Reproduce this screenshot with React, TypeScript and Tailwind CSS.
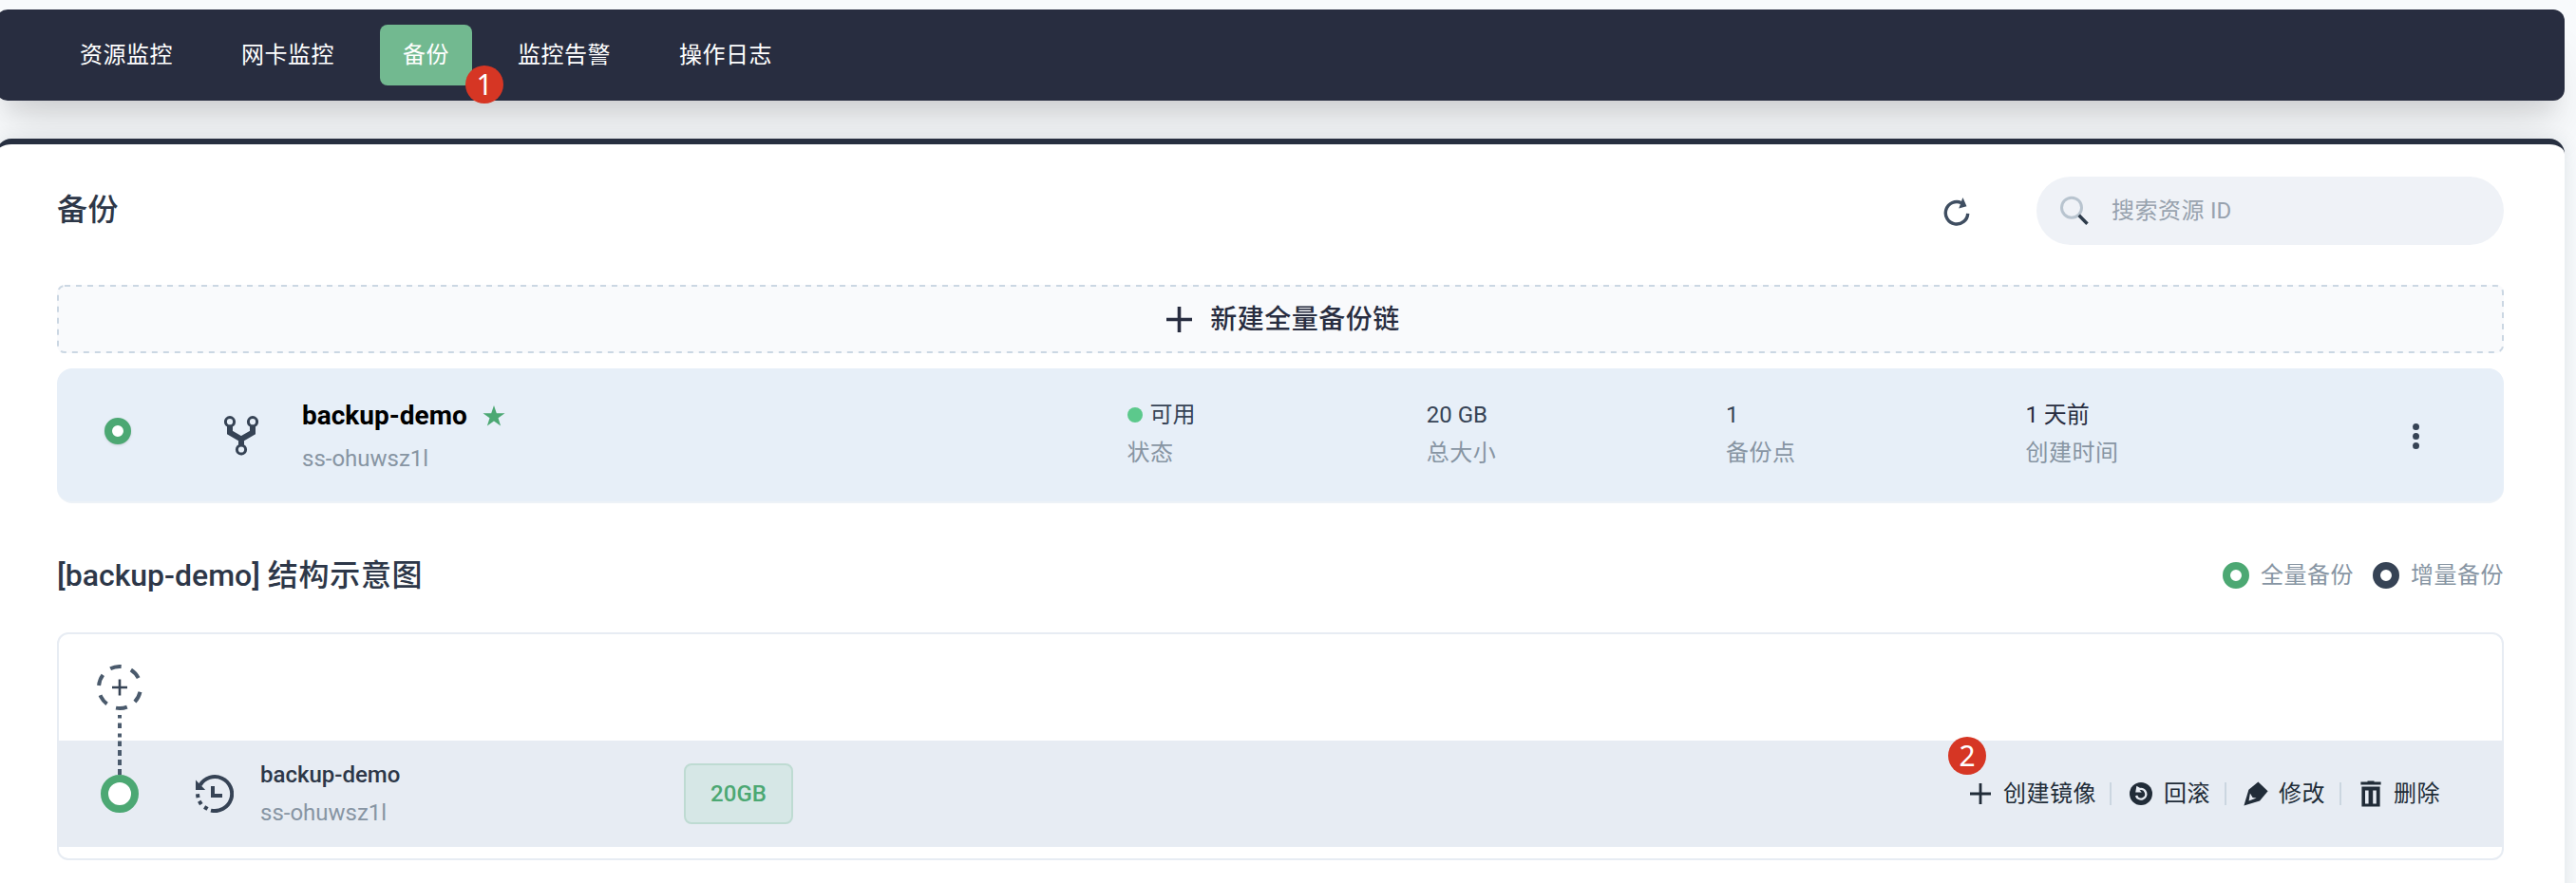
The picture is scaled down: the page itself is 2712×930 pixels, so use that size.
import React from "react";

const NAV = ["资源监控", "网卡监控", "备份", "监控告警", "操作日志"];

const Badge = ({ children, className }: { children: React.ReactNode; className: string }) => (
  <span
    className={`absolute flex h-10 w-10 items-center justify-center rounded-full bg-[#d63624] font-['Noto_Sans','Liberation_Sans',sans-serif] text-[30px] leading-10 tracking-normal text-white ${className}`}
  >
    {children}
  </span>
);

const Ring = ({ className }: { className: string }) => (
  <span className={`box-border block shrink-0 rounded-full bg-white ${className}`} />
);

const RefreshIcon = () => (
  <svg width="28" height="32" viewBox="0 0 28 32" fill="none">
    <path d="M25.7 18.8A11.7 11.7 0 1 1 19 7.7" stroke="#3f4e61" strokeWidth="3.4" />
    <path d="M20.4 2L24.5 11.2L16.3 13.4Z" fill="#3f4e61" />
  </svg>
);

const SearchIcon = () => (
  <svg width="32" height="32" viewBox="0 0 32 32" fill="none">
    <circle cx="13" cy="12.7" r="10.5" stroke="#b8c4cf" strokeWidth="3" />
    <path d="M20.7 20.7L29.5 29.8" stroke="#2d3b4b" strokeWidth="3.4" />
  </svg>
);

const PlusIcon = ({ size, stroke }: { size: number; stroke: number }) => (
  <svg width={size} height={size} viewBox={`0 0 ${size} ${size}`} className="shrink-0">
    <path
      d={`M${size / 2} 0V${size}M0 ${size / 2}H${size}`}
      stroke="currentColor"
      strokeWidth={stroke}
    />
  </svg>
);

const ForkIcon = () => (
  <svg width="36" height="42" viewBox="0 0 36 42" fill="none" stroke="#364355">
    <path d="M6 10V17.5L18 24.5L30 17.5V10M18 24V32" strokeWidth="6" />
    <circle cx="6" cy="6.2" r="4.6" fill="#e7eff8" strokeWidth="3" />
    <circle cx="30" cy="6.2" r="4.6" fill="#e7eff8" strokeWidth="3" />
    <circle cx="18" cy="35.5" r="4.6" fill="#e7eff8" strokeWidth="3" />
  </svg>
);

const HistoryIcon = () => (
  <svg width="40" height="40" viewBox="0 0 40 40" fill="none">
    <path d="M4.6 11A18 18 0 1 1 16 37.6" stroke="#364355" strokeWidth="4" />
    <path d="M0 5.5V16H10.2Z" fill="#364355" />
    <path d="M18 12V22H28" stroke="#364355" strokeWidth="4" />
    <rect x="0.2" y="20.2" width="4" height="4" fill="#364355" transform="rotate(-8 2 22)" />
    <rect x="2.8" y="27.4" width="4" height="4" fill="#364355" transform="rotate(-32 4.8 29.4)" />
    <rect x="8.8" y="33" width="4" height="4" fill="#364355" transform="rotate(-58 10.8 35)" />
  </svg>
);

const StarIcon = () => (
  <svg width="24" height="22" viewBox="0 0 24 22">
    <path d="M12 0L14.8 8.2H23.5L16.5 13.3L19.1 21.6L12 16.6L4.9 21.6L7.5 13.3L0.5 8.2H9.2Z" fill="#4ca873" />
  </svg>
);

const RollbackIcon = () => (
  <svg width="24" height="24" viewBox="0 0 24 24" fill="none">
    <circle cx="12" cy="12" r="12" fill="#212c38" />
    <path d="M10.4 7.2A5.3 5.3 0 1 1 7 14" stroke="#e7ecf3" strokeWidth="2.4" />
    <path d="M7.4 3.8L6.2 10.6L12.8 10.4L10.8 8.4L11.2 6Z" fill="#e7ecf3" />
  </svg>
);

const PenIcon = () => (
  <svg width="26" height="26" viewBox="0 0 26 26">
    <path d="M15.4 0.4L25.6 10.2L17 20.6L0.4 25.4L5.4 8.8Z" fill="#212c38" />
    <path d="M6.9 12.4L5.6 20.4L13.6 17.6L9.6 16.9Z" fill="#e7ecf3" />
  </svg>
);

const TrashIcon = () => (
  <svg width="22" height="28" viewBox="0 0 22 28">
    <path d="M7.5 0.4H14.5V1.6H21.6V4.4H0.4V1.6H7.5Z" fill="#212c38" />
    <path fillRule="evenodd" d="M1.4 6.4H20.6V27.4H1.4ZM5 10.4V24.4H8.6V10.4ZM13.2 10.4V24.4H16.8V10.4Z" fill="#212c38" />
  </svg>
);

const DASHES = [
  [53, 3.5], [61.5, 5.5], [72.5, 4], [80.5, 5.5], [90, 6], [100, 6], [110, 6],
];

const ChainHead = () => (
  <svg width="48" height="117" viewBox="0 0 48 117" fill="none">
    <circle
      cx="24" cy="24" r="22" stroke="#4a5a6c" strokeWidth="4" pathLength={360}
      strokeDasharray="31 28 31 39 31 26 31 27 31 27 31 27" transform="rotate(-116.5 24 24)"
    />
    <path d="M24 15.5V32.5M16 24H32" stroke="#364355" strokeWidth="2.6" />
    {DASHES.map(([y, h]) => (
      <rect key={y} x="22" y={y} width="4" height={h} fill="#4a5a6c" />
    ))}
  </svg>
);

const Stat = ({ value, label, className = "text-[#364355]", dot }: { value: string; label: string; className?: string; dot?: boolean }) => (
  <div className="w-[315.3px] shrink-0 pt-[29px]">
    <div className={`flex h-10 items-center gap-2 leading-10 tracking-normal ${className}`}>
      {dot && <span className="h-4 w-4 rounded-full bg-[#5cc98c]" />}
      <span>{value}</span>
    </div>
    <div className="h-10 leading-10 text-[#8795a3]">{label}</div>
  </div>
);

const Divider = () => <span className="h-6 w-0.5 bg-[#cbd6e0]" />;

export default function App() {
  return (
    <div className="h-[930px] w-[2712px] overflow-hidden bg-[#f8fafc] pt-2.5 font-['Roboto','Noto_Sans_CJK_SC',sans-serif] text-[24px] tracking-[0.5px] text-[#2d3748]">
      <nav className="-ml-1 flex h-24 w-[2704px] items-center gap-6 rounded-xl bg-[#282d40] pl-16 text-white shadow-[0_40px_50px_-10px_rgba(0,0,0,0.1),0_20px_20px_-10px_rgba(0,0,0,0.08)]">
        {NAV.map((item) =>
          item === "备份" ? (
            <div key={item} className="relative flex h-16 items-center rounded-lg bg-[#72b990] px-6">
              {item}
              <Badge className="-right-[33px] top-[43px]">1</Badge>
            </div>
          ) : (
            <div key={item} className="flex h-16 items-center px-6">{item}</div>
          ),
        )}
      </nav>

      <main className="mt-10 -ml-1 h-[900px] w-[2704px] rounded-2xl border-t-[6px] border-[#272f40] bg-white pl-16 pr-16 shadow-[0_2px_20px_rgba(30,60,70,0.12)]">
        <header className="flex h-[140px] items-center justify-between">
          <h1 className="-mt-0.5 text-[32px] font-medium leading-none">备份</h1>
          <div className="flex items-center gap-[70px]">
            <RefreshIcon />
            <div className="flex h-[72px] w-[492px] items-center gap-[23px] rounded-full bg-[#eff2f7] pl-6 text-[#98a2ae]">
              <SearchIcon />
              <span>
                搜索资源<span className="tracking-normal"> ID</span>
              </span>
            </div>
          </div>
        </header>

        <button className="relative mt-2 flex h-[72px] w-full items-center justify-center gap-[19px] rounded-lg bg-[#f9fafc] pl-1.5 text-[28px] font-medium text-[#282d40]">
          <svg className="absolute inset-0" width="2576" height="72" fill="none">
            <rect x="1" y="1" width="2574" height="70" rx="7" stroke="#cbd7e3" strokeWidth="2" strokeDasharray="6 6" />
          </svg>
          <PlusIcon size={27} stroke={3.6} />
          <span className="pt-0.5">新建全量备份链</span>
        </button>

        <section className="mt-4 flex h-[142px] rounded-2xl border-b-2 border-[#edf2f7] bg-[#e7eff8]">
          <div className="flex w-[176px] shrink-0 pl-[50px] pt-[52px]">
            <Ring className="h-7 w-7 border-8 border-[#4ca873] shadow-sm" />
          </div>
          <div className="w-[82px] shrink-0 pt-[50px]">
            <ForkIcon />
          </div>
          <div className="w-[868.5px] shrink-0 pt-[30px]">
            <div className="flex h-10 items-center gap-4 text-[28px] font-bold leading-10 tracking-normal text-black">
              <span>backup-demo</span>
              <StarIcon />
            </div>
            <div className="mt-[5px] h-10 leading-10 tracking-normal text-[#8795a3]">ss-ohuwsz1l</div>
          </div>
          <Stat dot value="可用" label="状态" />
          <Stat value="20 GB" label="总大小" />
          <Stat value="1" label="备份点" />
          <Stat value="1 天前" label="创建时间" className="text-[#282d40]" />
          <div className="flex flex-col gap-[3px] pl-[92.5px] pt-[58px]">
            <span className="h-[7px] w-[7px] rounded-full bg-[#364355]" />
            <span className="h-[7px] w-[7px] rounded-full bg-[#364355]" />
            <span className="h-[7px] w-[7px] rounded-full bg-[#364355]" />
          </div>
        </section>

        <div className="mt-[46px] flex h-[60px] items-center justify-between">
          <h2 className="text-[32px] font-medium leading-none tracking-normal">
            [backup-demo] <span className="tracking-[0.7px]">结构示意图</span>
          </h2>
          <div className="flex items-center text-[#8795a3]">
            <Ring className="h-7 w-7 border-8 border-[#4ca873]" />
            <span className="ml-3">全量备份</span>
            <Ring className="ml-5 h-7 w-7 border-8 border-[#364355]" />
            <span className="ml-3">增量备份</span>
          </div>
        </div>

        <section className="mt-[30px] h-60 rounded-xl border-2 border-[#e7ecf3] pt-28">
          <div className="relative flex h-28 items-center bg-[#e7ecf3] pl-11">
            <div className="absolute -top-20 left-10">
              <ChainHead />
            </div>
            <Ring className="h-10 w-10 border-8 border-[#4ca873]" />
            <div className="ml-[60px] flex w-[68px] shrink-0">
              <HistoryIcon />
            </div>
            <div className="w-[446px] shrink-0">
              <div className="h-10 font-medium leading-10 tracking-normal">backup-demo</div>
              <div className="h-10 leading-10 tracking-normal text-[#8795a3]">ss-ohuwsz1l</div>
            </div>
            <div className="flex h-16 w-[115px] items-center justify-center rounded-lg border-2 border-[#bedbd2] bg-[#d6e7e6] font-medium tracking-normal text-[#4ca873]">
              20GB
            </div>
            <div className="ml-auto flex items-center pr-[65px] text-[#212c38]">
              <div className="relative flex items-center gap-[13px]">
                <Badge className="-left-[23px] -top-[42px]">2</Badge>
                <PlusIcon size={22} stroke={2.8} />
                <span>创建镜像</span>
              </div>
              <div className="ml-[14px] flex items-center"><Divider /></div>
              <div className="ml-[19px] flex items-center gap-3"><RollbackIcon /><span>回滚</span></div>
              <div className="ml-[15px] flex items-center"><Divider /></div>
              <div className="ml-[18px] flex items-center gap-[11px]"><PenIcon /><span>修改</span></div>
              <div className="ml-[15px] flex items-center"><Divider /></div>
              <div className="ml-5 flex items-center gap-[13px]"><TrashIcon /><span>删除</span></div>
            </div>
          </div>
        </section>
      </main>
    </div>
  );
}
